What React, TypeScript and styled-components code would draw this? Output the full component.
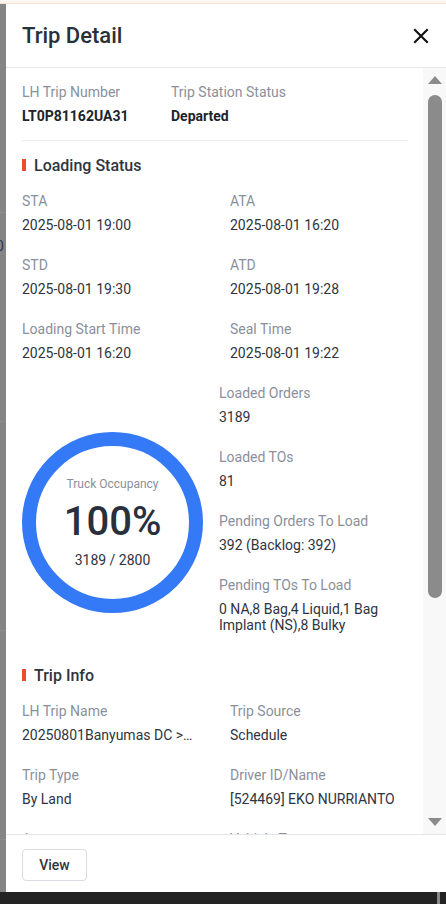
import React from 'react';
import styled, { createGlobalStyle } from 'styled-components';

const GlobalStyle = createGlobalStyle`
  html, body {
    margin: 0;
    padding: 0;
    height: 100%;
    overflow: hidden;
  }
  body {
    font-family: Roboto, 'Liberation Sans', Arial, sans-serif;
    -webkit-font-smoothing: antialiased;
  }
  #root {
    height: 100%;
  }
`;

interface FieldItem {
  label: string;
  value: string;
  truncate?: boolean;
}

const loadingTimes: FieldItem[] = [
  { label: 'STA', value: '2025-08-01 19:00' },
  { label: 'ATA', value: '2025-08-01 16:20' },
  { label: 'STD', value: '2025-08-01 19:30' },
  { label: 'ATD', value: '2025-08-01 19:28' },
  { label: 'Loading Start Time', value: '2025-08-01 16:20' },
  { label: 'Seal Time', value: '2025-08-01 19:22' },
];

const loadCounts: FieldItem[] = [
  { label: 'Loaded Orders', value: '3189' },
  { label: 'Loaded TOs', value: '81' },
  { label: 'Pending Orders To Load', value: '392 (Backlog: 392)' },
  {
    label: 'Pending TOs To Load',
    value: '0 NA,8 Bag,4 Liquid,1 Bag Implant (NS),8 Bulky',
  },
];

const tripInfo: FieldItem[] = [
  {
    label: 'LH Trip Name',
    value: '20250801Banyumas DC >Purwokerto Hub',
    truncate: true,
  },
  { label: 'Trip Source', value: 'Schedule' },
  { label: 'Trip Type', value: 'By Land' },
  { label: 'Driver ID/Name', value: '[524469] EKO NURRIANTO' },
  { label: 'Agency', value: 'PT Logistik Nusantara' },
  { label: 'Vehicle Type', value: 'CDD Long' },
];

const Field = ({ label, value, truncate }: FieldItem) => (
  <StyledField>
    <Label>{label}</Label>
    <Value $truncate={truncate}>{value}</Value>
  </StyledField>
);

const SectionTitle = ({
  children,
  spaced,
}: {
  children: React.ReactNode;
  spaced?: boolean;
}) => (
  <StyledSectionTitle $spaced={spaced}>
    <span className="marker" />
    {children}
  </StyledSectionTitle>
);

const CloseIcon = () => (
  <svg width="16" height="16" viewBox="0 0 16 16" fill="none">
    <path
      d="M2 2L14 14M14 2L2 14"
      stroke="#111"
      strokeWidth="2.1"
      strokeLinecap="square"
    />
  </svg>
);

const App = () => {
  return (
    <>
      <GlobalStyle />
      <Page>
        <TopBanner />
        <Stage>
          <Backdrop>
            <span className="peek">0</span>
          </Backdrop>
          <Drawer>
            <DrawerHeader>
              <h1>Trip Detail</h1>
              <CloseButton aria-label="Close">
                <CloseIcon />
              </CloseButton>
            </DrawerHeader>

            <DrawerBody>
              <Content>
                <SummaryRow>
                  <StyledField>
                    <Label>LH Trip Number</Label>
                    <Value $strong>LT0P81162UA31</Value>
                  </StyledField>
                  <StyledField>
                    <Label>Trip Station Status</Label>
                    <Value $strong>Departed</Value>
                  </StyledField>
                </SummaryRow>

                <SectionTitle>Loading Status</SectionTitle>
                <FieldGrid>
                  {loadingTimes.map((item) => (
                    <Field key={item.label} {...item} />
                  ))}
                </FieldGrid>
                <OccupancyRow>
                  <OccupancyCell>
                    <OccupancyRing>
                      <span className="caption">Truck Occupancy</span>
                      <span className="percent">100%</span>
                      <span className="ratio">3189 / 2800</span>
                    </OccupancyRing>
                  </OccupancyCell>
                  <FieldStack>
                    {loadCounts.map((item) => (
                      <Field key={item.label} {...item} />
                    ))}
                  </FieldStack>
                </OccupancyRow>

                <SectionTitle spaced>Trip Info</SectionTitle>
                <FieldGrid>
                  {tripInfo.map((item) => (
                    <Field key={item.label} {...item} />
                  ))}
                </FieldGrid>
              </Content>

              <ScrollTrack>
                <ScrollArrow $dir="up" />
                <ScrollThumb />
                <ScrollArrow $dir="down" />
              </ScrollTrack>
            </DrawerBody>

            <DrawerFooter>
              <GhostButton>View</GhostButton>
            </DrawerFooter>
          </Drawer>
        </Stage>
        <BottomBar>
          <span className="mark" />
        </BottomBar>
      </Page>
    </>
  );
};

const Page = styled.div`
  display: flex;
  flex-direction: column;
  height: 100vh;
`;

const TopBanner = styled.div`
  height: 4px;
  box-sizing: border-box;
  background: #fdf6f1;
  border-bottom: 1px solid #f6e2d5;
`;

const Stage = styled.div`
  flex: 1;
  min-height: 0;
  display: flex;
`;

const Backdrop = styled.div`
  width: 6px;
  flex-shrink: 0;
  overflow: hidden;
  background: #858585;
  background-image: repeating-linear-gradient(
    to bottom,
    transparent 0,
    transparent 208px,
    #8e8e8e 208px,
    #8e8e8e 209px
  );
  .peek {
    display: block;
    margin: 234px 0 0 -4px;
    font-size: 14px;
    line-height: 16px;
    color: #2c3850;
  }
`;

const Drawer = styled.div`
  flex: 1;
  min-width: 0;
  display: flex;
  flex-direction: column;
  background: #fff;
`;

const DrawerHeader = styled.div`
  height: 64px;
  flex-shrink: 0;
  box-sizing: border-box;
  display: flex;
  align-items: center;
  justify-content: space-between;
  padding: 0 17px 0 16px;
  border-bottom: 1px solid #e6e8ec;

  h1 {
    margin: 0;
    font-size: 22px;
    font-weight: 500;
    line-height: 28px;
    color: #29303b;
  }
`;

const CloseButton = styled.button`
  display: flex;
  padding: 0;
  border: 0;
  background: none;
  cursor: pointer;
`;

const DrawerBody = styled.div`
  flex: 1;
  min-height: 0;
  display: flex;
`;

const Content = styled.div`
  flex: 1;
  min-width: 0;
  overflow: hidden;
  padding: 16px 16px 0 16px;
`;

const SummaryRow = styled.div`
  display: grid;
  grid-template-columns: 149px 1fr;
  padding-bottom: 16px;
  border-bottom: 1px solid #e9ecf1;
`;

const StyledField = styled.div`
  display: flex;
  flex-direction: column;
  min-width: 0;
`;

const Label = styled.div`
  font-size: 14px;
  line-height: 16px;
  color: #8a909b;
  margin-bottom: 8px;
`;

const Value = styled.div<{ $strong?: boolean; $truncate?: boolean }>`
  font-size: 14px;
  line-height: 16px;
  color: ${({ $strong }) => ($strong ? '#1e232b' : '#2f3440')};
  font-weight: ${({ $strong }) => ($strong ? 700 : 400)};
  ${({ $truncate }) =>
    $truncate &&
    `
    white-space: nowrap;
    overflow: hidden;
    text-overflow: ellipsis;
  `}
`;

const StyledSectionTitle = styled.div<{ $spaced?: boolean }>`
  display: flex;
  align-items: center;
  gap: 8px;
  margin: ${({ $spaced }) => ($spaced ? '30px' : '12px')} 0 16px;
  height: 24px;
  font-size: 16px;
  font-weight: 500;
  color: #2f3540;

  .marker {
    width: 4px;
    height: 12px;
    background: #ee4d2d;
  }
`;

const FieldGrid = styled.div`
  display: grid;
  grid-template-columns: 176px 1fr;
  column-gap: 32px;
  row-gap: 24px;
`;

const OccupancyRow = styled.div`
  display: flex;
  gap: 16px;
  margin-top: 24px;
`;

const FieldStack = styled.div`
  flex: 1;
  min-width: 0;
  display: flex;
  flex-direction: column;
  gap: 24px;
`;

const OccupancyCell = styled.div`
  flex-shrink: 0;
  padding-top: 47px;
`;

const OccupancyRing = styled.div`
  width: 181px;
  height: 181px;
  box-sizing: border-box;
  border: 14px solid #3479f6;
  border-radius: 50%;
  display: flex;
  flex-direction: column;
  align-items: center;
  justify-content: center;

  .caption {
    font-size: 12px;
    line-height: 14px;
    color: #8a909b;
  }
  .percent {
    margin-top: 9px;
    font-size: 40px;
    font-weight: 500;
    line-height: 44px;
    color: #29303b;
  }
  .ratio {
    margin-top: 8px;
    font-size: 14px;
    line-height: 16px;
    color: #2f3440;
  }
`;

const ScrollTrack = styled.div`
  width: 23px;
  flex-shrink: 0;
  display: flex;
  flex-direction: column;
  align-items: center;
  background: #f8f8f8;
`;

const ScrollArrow = styled.span<{ $dir: 'up' | 'down' }>`
  width: 0;
  height: 0;
  border-left: 7.5px solid transparent;
  border-right: 7.5px solid transparent;
  ${({ $dir }) =>
    $dir === 'up'
      ? 'border-bottom: 8px solid #8b8b8b; margin-top: 8px;'
      : 'border-top: 8px solid #8b8b8b; margin: auto 0 8px;'}
`;

const ScrollThumb = styled.span`
  width: 14px;
  height: 503px;
  margin-top: 11px;
  border-radius: 7px;
  background: #8b8b8b;
`;

const DrawerFooter = styled.div`
  height: 58px;
  flex-shrink: 0;
  box-sizing: border-box;
  display: flex;
  align-items: flex-start;
  padding: 14px 16px 0;
  border-top: 1px solid #e4e6ec;
`;

const GhostButton = styled.button`
  height: 32px;
  width: 65px;
  border: 1px solid #d9dce2;
  border-radius: 4px;
  background: #fff;
  font-family: inherit;
  font-size: 14px;
  font-weight: 500;
  color: #2f3440;
  cursor: pointer;
`;

const BottomBar = styled.div`
  height: 12px;
  flex-shrink: 0;
  display: flex;
  justify-content: flex-end;
  background: #232323;

  .mark {
    width: 3px;
    margin-right: 6px;
    background: #8a8a8a;
  }
`;

export default App;
